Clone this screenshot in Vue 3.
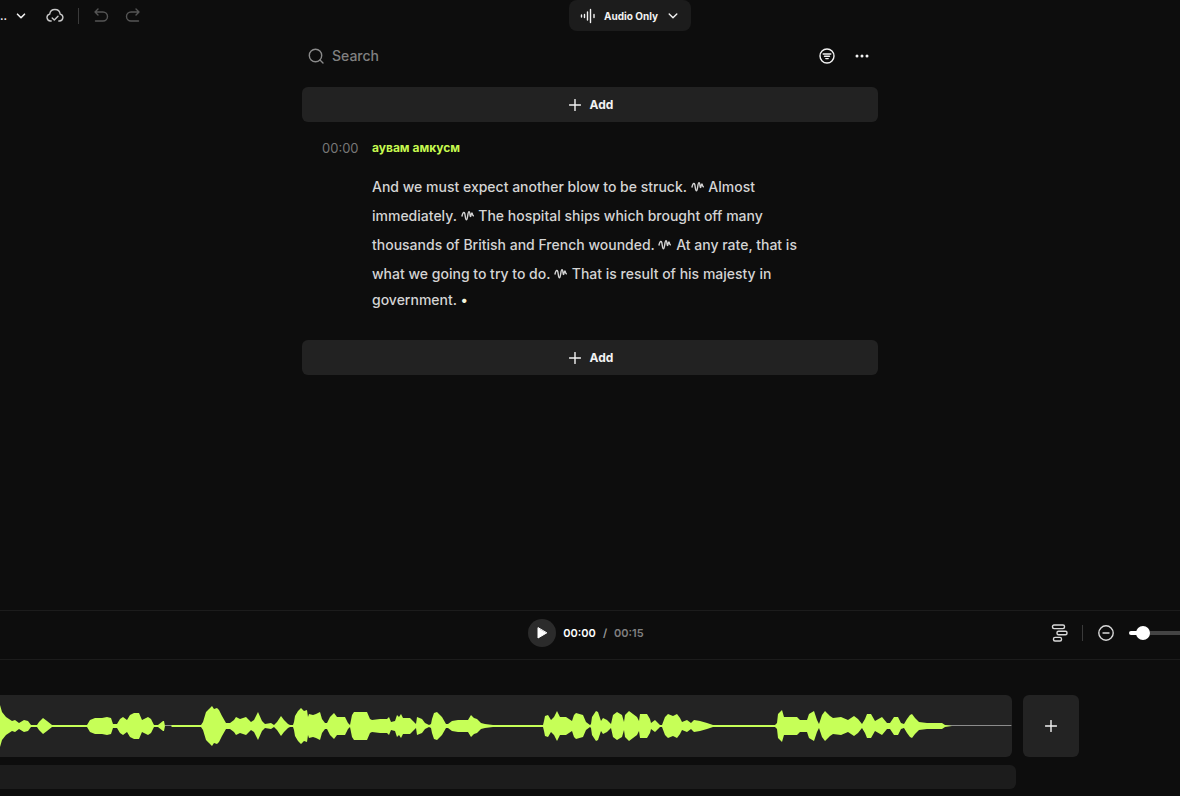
<script setup>
import { ref, computed } from 'vue';

const search = ref('');
const zoom = ref(7);
const playing = ref(false);

const segments = [
	{ text: 'And we must expect another blow to be struck.', pause: true },
	{ text: 'Almost immediately.', pause: true },
	{
		text: 'The hospital ships which brought off many thousands of British and French wounded.',
		pause: true,
	},
	{ text: 'At any rate, that is what we going to try to do.', pause: true },
	{ text: 'That is result of his majesty in government.', pause: false },
];

// [position, loudness] pairs, drawn mirrored around the middle line
const peaks = [
	[0, 21], [2, 14], [6, 9], [12, 5], [15, 6], [19, 3], [24, 6], [28, 5],
	[31, 1], [37, 1], [39, 4], [43, 8], [47, 5], [52, 1], [87, 1], [90, 6],
	[95, 8], [102, 8], [107, 9], [111, 8], [113, 2], [117, 2], [120, 7],
	[123, 9], [127, 6], [130, 11], [134, 13], [139, 13], [142, 6], [148, 9],
	[151, 7], [154, 1], [158, 1], [163, 5], [164, 5], [165, 0], [171, 0],
	[172, 1], [201, 1], [203, 4], [206, 14], [209, 17], [212, 20], [214, 17],
	[217, 18], [219, 16], [222, 10], [226, 3], [230, 3], [234, 6], [236, 9],
	[240, 7], [246, 9], [251, 4], [254, 6], [258, 14], [262, 5], [265, 2],
	[271, 3], [274, 1], [277, 4], [281, 10], [284, 6], [288, 2], [290, 1],
	[293, 1], [294, 4], [295, 10], [298, 15], [301, 18], [304, 15], [307, 16],
	[308, 9], [309, 12], [313, 11], [316, 12], [320, 14], [322, 7], [325, 3],
	[327, 3], [330, 9], [334, 13], [337, 9], [345, 9], [348, 3], [350, 1],
	[352, 11], [354, 14], [367, 14], [370, 7], [372, 6], [380, 7], [387, 7],
	[389, 9], [391, 4], [395, 5], [397, 11], [399, 9], [401, 12], [403, 8],
	[410, 8], [413, 5], [416, 2], [417, 9], [422, 7], [425, 3], [429, 1],
	[431, 2], [432, 7], [434, 13], [437, 14], [442, 9], [446, 2], [448, 2],
	[452, 5], [458, 6], [468, 6], [471, 11], [474, 8], [477, 7], [481, 3],
	[485, 2], [493, 1], [543, 1], [544, 5], [545, 10], [548, 11], [551, 6],
	[554, 9], [557, 15], [560, 9], [566, 9], [572, 5], [574, 11], [576, 13],
	[583, 11], [586, 4], [590, 1], [591, 2], [592, 9], [596, 15], [598, 14],
	[601, 5], [603, 8], [607, 6], [611, 2], [613, 11], [617, 14], [622, 11],
	[624, 4], [625, 11], [629, 15], [637, 9], [639, 5], [640, 12], [647, 12],
	[650, 7], [651, 3], [655, 6], [660, 1], [662, 1], [665, 9], [668, 12],
	[673, 10], [677, 12], [680, 8], [682, 4], [687, 6], [691, 3], [694, 6],
	[700, 5], [707, 3], [713, 1], [775, 1], [777, 3], [778, 12], [782, 16],
	[784, 9], [797, 9], [800, 6], [807, 6], [809, 12], [814, 15], [817, 6],
	[819, 2], [822, 11], [825, 15], [830, 10], [833, 8], [841, 9], [848, 6],
	[854, 10], [858, 7], [862, 2], [865, 7], [867, 12], [871, 12], [875, 5],
	[882, 9], [887, 3], [890, 3], [894, 9], [898, 9], [901, 3], [904, 2],
	[907, 7], [910, 11], [912, 12], [915, 8], [919, 4], [927, 3], [942, 3],
	[945, 1], [952, 0],
];

const wavePath = computed(() => {
	const top = peaks.map(([x, y]) => `${x},${31 - y}`);
	const bottom = peaks.map(([x, y]) => `${x},${31 + y}`).reverse();
	return `M${top.join('L')}L${bottom.join('L')}Z`;
});
</script>

<template>
	<div class="editor">
		<header class="header">
			<div class="header-left">
				<button class="project" type="button" aria-label="Project menu">
					<span>..</span>
					<svg width="10" height="10" viewBox="0 0 10 10">
						<path d="M1.5 3.2 5 6.7l3.5-3.5" />
					</svg>
				</button>
				<button class="saved" type="button" aria-label="Saved to cloud">
					<svg width="18" height="16" viewBox="0 0 18 16">
						<path d="M5.2 13H4.6a3.5 3.5 0 0 1-.9-6.9 5.3 5.3 0 0 1 10.5 0 3.5 3.5 0 0 1-.8 6.9h-.6" />
						<path d="m6.2 10 2.1 2.1L12 8.3" />
					</svg>
				</button>
				<span class="divider"></span>
				<button class="history" type="button" aria-label="Undo">
					<svg width="16" height="16" viewBox="0 0 16 16">
						<path d="m5 1-3 3 3 3M2 4h8a4.5 4.5 0 0 1 0 9H2.5" />
					</svg>
				</button>
				<button class="history" type="button" aria-label="Redo">
					<svg width="16" height="16" viewBox="0 0 16 16">
						<path d="m11 1 3 3-3 3M14 4H6a4.5 4.5 0 0 0 0 9h7.5" />
					</svg>
				</button>
			</div>
			<button class="mode" type="button">
				<svg width="16" height="16" viewBox="0 0 16 16">
					<path d="M1.5 7v2M4.5 6.5v3M7.5 4v8M10.5 1.5v13M14 6.5v3" />
				</svg>
				<span>Audio Only</span>
				<svg class="mode-arrow" width="10" height="10" viewBox="0 0 10 10">
					<path d="M1.2 3 5 6.8 8.8 3" />
				</svg>
			</button>
		</header>

		<main class="script">
			<div class="toolbar">
				<label class="search">
					<svg width="16" height="16" viewBox="0 0 16 16">
						<circle cx="7.5" cy="7.5" r="6.2" />
						<path d="m12 12 3 3" />
					</svg>
					<input
						type="text"
						placeholder="Search"
						aria-label="Search"
						v-model="search"
					/>
				</label>
				<button class="tool" type="button" aria-label="Filter">
					<svg width="16" height="16" viewBox="0 0 16 16">
						<circle cx="8" cy="8" r="7" />
						<path d="M4.2 6h7.6M5.5 8.3h5M6.8 10.6h2.4" />
					</svg>
				</button>
				<button class="tool" type="button" aria-label="More">
					<svg class="dots" width="16" height="16" viewBox="0 0 16 16">
						<circle cx="3" cy="8" r="1.5" />
						<circle cx="8" cy="8" r="1.5" />
						<circle cx="13" cy="8" r="1.5" />
					</svg>
				</button>
			</div>

			<button class="add" type="button">
				<svg width="12" height="12" viewBox="0 0 12 12">
					<path d="M6 .5v11M.5 6h11" />
				</svg>
				Add
			</button>

			<section class="block">
				<time class="block-time">00:00</time>
				<div class="block-body">
					<h4 class="speaker">аувам амкусм</h4>
					<p class="transcript">
						<template v-for="segment in segments" :key="segment.text">
							{{ segment.text + ' ' }}
							<span v-if="segment.pause" class="pause">
								<svg width="13" height="12" viewBox="0 0 13 12">
									<path d="M1 6C1.8 3 2.6 2 3.3 2.6 4.4 3.6 4.2 9.8 5.4 9.8 6.8 9.8 6.6 1.8 8 1.8 9.2 1.8 8.8 6.5 9.5 6.5 10.2 6.5 10 3 10.9 3 11.6 3 11.3 5.6 12.3 5.8" />
								</svg>
							</span>
							{{ ' ' }}
						</template>
						<span class="end">•</span>
					</p>
				</div>
			</section>

			<button class="add" type="button">
				<svg width="12" height="12" viewBox="0 0 12 12">
					<path d="M6 .5v11M.5 6h11" />
				</svg>
				Add
			</button>
		</main>

		<section class="player">
			<div class="playback">
				<button
					class="play"
					type="button"
					aria-label="Play"
					@click="playing = !playing"
				>
					<svg width="12" height="14" viewBox="0 0 12 14">
						<path d="M2 2v10l8.5-5z" />
					</svg>
				</button>
				<span class="current">00:00</span>
				<span class="slash">/</span>
				<span class="total">00:15</span>
			</div>
			<div class="zoom">
				<button class="tool" type="button" aria-label="Tracks">
					<svg width="18" height="18" viewBox="0 0 18 18">
						<rect x="2.5" y="1" width="12" height="3.6" rx="1.5" />
						<rect x="7" y="7.2" width="10" height="3.6" rx="1.5" />
						<rect x="3.5" y="13.4" width="8" height="3.6" rx="1.5" />
					</svg>
				</button>
				<span class="divider"></span>
				<button class="tool" type="button" aria-label="Zoom out">
					<svg width="18" height="18" viewBox="0 0 18 18">
						<circle cx="9" cy="9" r="7.2" />
						<path d="M6 9h6" />
					</svg>
				</button>
				<input
					class="slider"
					type="range"
					min="0"
					max="100"
					aria-label="Zoom"
					:style="{ '--fill': zoom + '%' }"
					v-model="zoom"
				/>
			</div>
		</section>

		<section class="timeline">
			<div class="track">
				<div class="clip">
					<svg class="wave" viewBox="0 0 1012 62" preserveAspectRatio="none">
						<path class="silence" d="M165 30.5h7M945 30.5h66" />
						<path class="sound" :d="wavePath" />
					</svg>
				</div>
				<button class="add-clip" type="button" aria-label="Add clip">
					<svg width="12" height="12" viewBox="0 0 12 12">
						<path d="M6 .5v11M.5 6h11" />
					</svg>
				</button>
			</div>
			<div class="track-empty"></div>
		</section>
	</div>
</template>

<style>
body {
	background-color: #0d0d0d;
}
</style>

<style scoped>
.editor {
	display: flex;
	flex-direction: column;
	min-height: 100vh;
	overflow: hidden;
	background-color: #0d0d0d;
	color: #f2f2f2;
	font-family: Inter, 'Liberation Sans', sans-serif;
	font-size: 14px;
}

button {
	display: flex;
	align-items: center;
	justify-content: center;
	padding: 0;
	border: none;
	background: none;
	color: inherit;
	font-family: inherit;
	cursor: pointer;
}

svg {
	flex-shrink: 0;
	fill: none;
	stroke: currentColor;
	stroke-width: 1.4;
	stroke-linecap: round;
	stroke-linejoin: round;
}

.header {
	display: grid;
	grid-template-columns: 1fr auto 1fr;
	align-items: center;
	margin-right: -80px;
}
.header-left {
	display: flex;
	align-items: center;
}
.project {
	gap: 9px;
	font-size: 11px;
	font-weight: 600;
}
.project svg {
	stroke-width: 1.6;
}
.saved {
	margin: 0 14px 0 20px;
	color: #c8c8c8;
}
.divider {
	width: 1px;
	height: 16px;
	background-color: #3a3a3a;
}
.history {
	margin-left: 16px;
	color: #555;
}
.header .divider {
	margin-right: -2px;
}

.mode {
	gap: 8px;
	height: 31px;
	padding: 0 13px 0 11px;
	border-radius: 8px;
	background-color: #1c1c1c;
	font-size: 10px;
	font-weight: 700;
}
.mode-arrow {
	margin-left: 2px;
}

.script {
	flex: 1;
	width: 100%;
	max-width: 576px;
	margin: 0 auto;
	padding-top: 7px;
}
.toolbar {
	display: flex;
	align-items: center;
	gap: 19px;
	height: 35px;
	margin-bottom: 14px;
	padding: 0 8px 0 6px;
}
.search {
	display: flex;
	flex: 1;
	align-items: center;
	gap: 8px;
	color: #8a8a8a;
}
.search input {
	flex: 1;
	padding: 0;
	border: none;
	outline: none;
	background: none;
	color: #f2f2f2;
	font-family: inherit;
	font-size: 14px;
	font-weight: 500;
}
.search input::placeholder {
	color: #808080;
}
.dots {
	fill: currentColor;
	stroke: none;
}

.add {
	gap: 9px;
	width: 100%;
	height: 35px;
	padding-left: 2px;
	border-radius: 6px;
	background-color: #222;
	font-size: 12px;
	font-weight: 700;
}

.block {
	display: flex;
	gap: 14px;
	margin-bottom: 27px;
	padding: 16px 60px 0 20px;
}
.block-time {
	width: 36px;
	color: #777;
	font-size: 13px;
	line-height: 20px;
}
.block-body {
	flex: 1;
}
.speaker {
	margin: 0 0 13px;
	color: #c6f94f;
	font-size: 12px;
	font-weight: 700;
	line-height: 20px;
}
.transcript {
	margin: 0;
	color: #d4d4d4;
	font-size: 14px;
	font-weight: 500;
	line-height: 26px;
}
.pause {
	display: inline-flex;
	align-items: flex-end;
	height: 29px;
	margin-right: 1px;
	padding-bottom: 7px;
	box-sizing: border-box;
	vertical-align: bottom;
}
.end {
	color: #f4f4dc;
}

.player {
	display: grid;
	grid-template-columns: 1fr auto 1fr;
	align-items: center;
	height: 50px;
	margin-top: 16px;
	padding-bottom: 5px;
	box-sizing: border-box;
	border-top: 1px solid #1c1c1c;
	border-bottom: 1px solid #1c1c1c;
}
.playback {
	display: flex;
	grid-column: 2;
	align-items: center;
	padding-right: 8px;
	font-size: 11px;
	font-weight: 600;
}
.play {
	width: 28px;
	height: 28px;
	margin-right: 7px;
	border-radius: 50%;
	background-color: #2b2b2b;
}
.play svg {
	fill: #fff;
	stroke: #fff;
	stroke-width: 1;
}
.current {
	color: #fff;
}
.slash {
	margin: 0 7px;
	color: #999;
}
.total {
	color: #808080;
}
.zoom {
	display: flex;
	align-items: center;
	justify-content: flex-end;
	gap: 14px;
	margin-right: -68px;
}
.zoom .tool {
	color: #d8d8d8;
}
.slider {
	width: 119px;
	height: 16px;
	margin: 0;
	appearance: none;
	background: none;
}
.slider::-webkit-slider-runnable-track {
	height: 4px;
	border-radius: 2px;
	background: linear-gradient(to right, #fff var(--fill), #444 var(--fill));
}
.slider::-webkit-slider-thumb {
	appearance: none;
	width: 14px;
	height: 14px;
	margin-top: -5px;
	border-radius: 50%;
	background-color: #fff;
}

.timeline {
	padding: 35px 101px 7px 0;
}
.track {
	display: flex;
	gap: 11px;
	height: 62px;
	margin-bottom: 8px;
}
.clip {
	flex: 1;
	border-radius: 0 6px 6px 0;
	background-color: #232323;
}
.wave {
	display: block;
	width: 100%;
	height: 62px;
}
.sound {
	fill: #c6ff57;
	stroke: none;
}
.silence {
	stroke: #8c8c8c;
	stroke-width: 1;
}
.add-clip {
	width: 56px;
	border-radius: 6px;
	background-color: #232323;
}
.track-empty {
	height: 24px;
	margin-right: 63px;
	border-radius: 0 6px 6px 0;
	background-color: #1c1c1c;
}
</style>
